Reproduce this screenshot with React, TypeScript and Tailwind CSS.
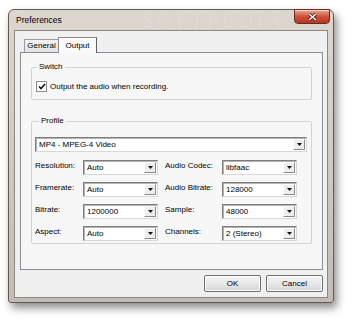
import React from 'react';

const Combo: React.FC<{ value: string; className?: string }> = ({ value, className = '' }) => (
  <div
    className={`h-[15px] bg-white border border-t-[#7d7d7d] border-l-[#7d7d7d] border-r-[#d8d8d8] border-b-[#d8d8d8] shadow-[inset_1px_1px_0_#b4b4b4] flex items-center justify-between ${className}`}
  >
    <span className="pl-[3px] leading-none text-black">{value}</span>
    <div className="w-[12px] h-[11px] mr-[1px] bg-[#eeeeee] border border-t-white border-l-white border-r-[#8a8a8a] border-b-[#8a8a8a] flex items-center justify-center">
      <svg width="5" height="3" viewBox="0 0 5 3">
        <path d="M0 0H5L2.5 3Z" fill="#111" />
      </svg>
    </div>
  </div>
);

const Field: React.FC<{ label: string; value: string; labelWidth: string }> = ({ label, value, labelWidth }) => (
  <div className="flex items-start">
    <span className={`${labelWidth} pt-[2px] leading-none`}>{label}</span>
    <Combo value={value} className="w-[75px] h-[14px]" />
  </div>
);

const rows: [string, string, string, string][] = [
  ['Resolution:', 'Auto', 'Audio Codec:', 'libfaac'],
  ['Framerate:', 'Auto', 'Audio Bitrate:', '128000'],
  ['Bitrate:', '1200000', 'Sample:', '48000'],
  ['Aspect:', 'Auto', 'Channels:', '2 (Stereo)'],
];

const WinButton: React.FC<{ label: string }> = ({ label }) => (
  <button className="w-[57px] h-[17px] rounded-[2px] border border-[#707070] bg-gradient-to-b from-[#f4f4f4] via-[#e8e8e8] to-[#d6d6d6] shadow-[inset_0_0_0_1px_#fcfcfc] text-black leading-none">
    {label}
  </button>
);

export default function App() {
  return (
    <div className="w-[350px] h-[319px] bg-white pl-[8px] pt-[9px] font-['Liberation_Sans',Arial,sans-serif] text-[8px] text-black">
      <div className="w-[326px] h-[294px] rounded-t-[6px] rounded-b-[3px] border border-[#5f5a55] bg-gradient-to-b from-[#ddd6cf] via-[#d2cac2] to-[#c4bcb4] shadow-[3px_5px_8px_rgba(0,0,0,0.45)] flex flex-col">
        {/* title bar */}
        <div className="h-[21px] flex items-center pl-[7px] pr-[3px]">
          <span className="text-[8.5px] leading-none text-black">Preferences</span>
          <span className="ml-auto mr-[8px] font-['Liberation_Serif',serif] text-[20px] leading-none tracking-[4px] text-[#e4ddd6] opacity-60">
            SOFTPEDIA
          </span>
          <div className="self-start -mt-[1px] w-[36px] h-[15px] rounded-b-[4px] border border-[#6a2b21] bg-gradient-to-b from-[#e8a798] via-[#cf503b] to-[#b8361f] shadow-[inset_0_1px_0_rgba(255,255,255,0.5)] flex items-center justify-center">
            <svg width="9" height="8" viewBox="0 0 9 8">
              <path d="M1 1L8 7M8 1L1 7" stroke="#4a1a12" strokeWidth="3" />
              <path d="M1 1L8 7M8 1L1 7" stroke="#fff" strokeWidth="1.6" />
            </svg>
          </div>
        </div>

        {/* client area */}
        <div className="mx-[6px] h-[266px] bg-[#f0f0f0] outline outline-1 outline-[#8e877f] flex flex-col pl-[5px] pr-[4px] pt-[6px]">
          {/* tabs */}
          <div className="h-[15px] flex items-end pl-[4px]">
            <div className="w-[35px] h-[13px] border border-b-0 border-[#9a9ca3] bg-gradient-to-b from-[#f3f3f3] to-[#e3e3e3] flex items-center justify-center leading-none">
              General
            </div>
            <div className="relative z-10 -ml-[1px] -mb-[1px] w-[39px] h-[16px] border border-b-0 border-[#898c95] border-r-[#5c5f66] bg-[#fafafa] flex items-center justify-center leading-none">
              Output
            </div>
          </div>

          {/* tab panel */}
          <div className="h-[218px] border border-[#898c95] bg-[#f7f7f7] pl-[10px] pr-[10px]">
            <fieldset className="mt-[9px] h-[38px] border border-[#cfd5d9] rounded-[2px]">
              <legend className="ml-[5px] px-[2px] leading-[10px]">Switch</legend>
              <label className="flex items-center pl-[4px] pt-[9px]">
                <span className="w-[11px] h-[11px] bg-white border border-[#8e8f8f] flex items-center justify-center">
                  <svg width="8" height="7" viewBox="0 0 8 7">
                    <path d="M1 3.5L3 5.5L7 1" stroke="#111" strokeWidth="1.6" fill="none" />
                  </svg>
                </span>
                <span className="ml-[3px] leading-none">Output the audio when recording.</span>
              </label>
            </fieldset>

            <fieldset className="mt-[16px] h-[128px] border border-[#cfd5d9] rounded-[2px] pl-[3px] pr-[4px]">
              <legend className="ml-[4px] px-[2px] leading-[10px]">Profile</legend>
              <Combo value="MP4 - MPEG-4 Video" className="mt-[11px] w-[272px]" />
              <div className="mt-[8px] flex flex-col gap-[7px]">
                {rows.map(([l1, v1, l2, v2]) => (
                  <div key={l1} className="flex">
                    <Field label={l1} value={v1} labelWidth="w-[48px]" />
                    <div className="ml-[7px]">
                      <Field label={l2} value={v2} labelWidth="w-[57px]" />
                    </div>
                  </div>
                ))}
              </div>
            </fieldset>
          </div>

          {/* buttons */}
          <div className="mt-[5px] flex justify-end gap-[5px]">
            <WinButton label="OK" />
            <WinButton label="Cancel" />
          </div>
        </div>
      </div>
    </div>
  );
}
